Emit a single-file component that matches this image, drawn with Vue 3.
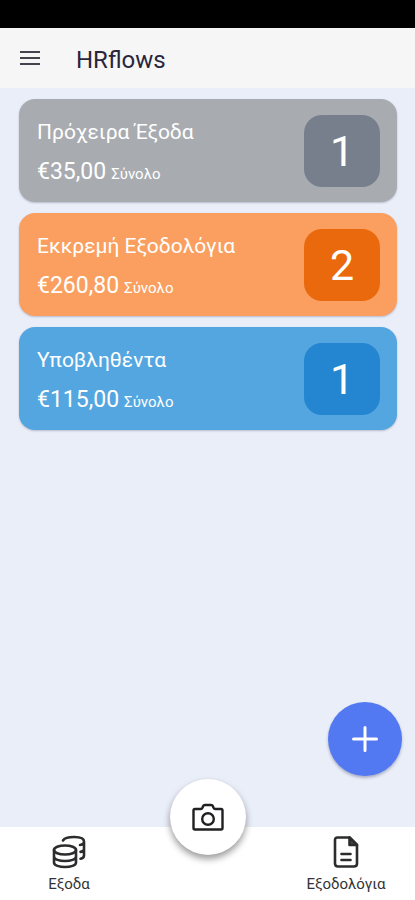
<script setup>
const cards = [
  { tone: 'draft', title: 'Πρόχειρα Έξοδα', amount: '€35,00', count: 1 },
  { tone: 'pending', title: 'Εκκρεμή Εξοδολόγια', amount: '€260,80', count: 2 },
  { tone: 'submitted', title: 'Υποβληθέντα', amount: '€115,00', count: 1 }
]
</script>

<template>
  <div class="screen">
    <div class="status"></div>
    <header class="bar">
      <button class="menu" type="button" aria-label="Μενού">
        <svg width="20" height="16" viewBox="0 0 20 16" fill="none" stroke="#44434d" stroke-width="2">
          <path d="M0 2H20M0 8H20M0 14H20" />
        </svg>
      </button>
      <h1>HRflows</h1>
    </header>

    <main class="content">
      <a v-for="card in cards" :key="card.tone" href="#" class="card" :class="card.tone">
        <div class="info">
          <h2>{{ card.title }}</h2>
          <p><span class="amount">{{ card.amount }}</span><small>Σύνολο</small></p>
        </div>
        <span class="count">{{ card.count }}</span>
      </a>
    </main>

    <footer class="dock">
      <button class="add" type="button" aria-label="Προσθήκη">
        <svg width="26" height="26" viewBox="0 0 26 26" fill="none" stroke="#fff" stroke-width="3" stroke-linecap="round">
          <path d="M13 1.5V24.5M1.5 13H24.5" />
        </svg>
      </button>
      <button class="camera" type="button" aria-label="Κάμερα">
        <svg width="32" height="28" viewBox="0 0 32 28" fill="none" stroke="#202022" stroke-width="2.4" stroke-linejoin="round">
          <path d="M3 6H8.5Q10 6 10.6 4.5L11 3.3Q11.5 2 13 2H19Q20.5 2 21 3.3L21.4 4.5Q22 6 23.5 6H29Q30.5 6 30.5 7.5V25Q30.5 26.5 29 26.5H3Q1.5 26.5 1.5 25V7.5Q1.5 6 3 6Z" />
          <circle cx="16" cy="16" r="5.8" />
        </svg>
      </button>
      <nav class="tabs">
        <a href="#">
          <svg width="34" height="34" viewBox="0 0 34 34" fill="none" stroke="#2c2c2e" stroke-width="2.6" stroke-linecap="round">
            <ellipse cx="13" cy="15" rx="11" ry="4.5" />
            <path d="M2 15V27.500C2 33.500 24 33.500 24 27.500V15M2 21.500C2 27.500 24 27.500 24 21.500" />
            <path d="M11 5.5C13.500 1 32 0.200 32 6.500V20.500C32 22.500 31 23.300 28.500 23.800M32 7C32 8.800 30.500 9.700 28 10M32 14C32 15.700 31 16.500 28.500 16.900" />
          </svg>
          <span>Εξοδα</span>
        </a>
        <a href="#">
          <svg width="34" height="34" viewBox="0 0 34 34" fill="none" stroke="#2c2c2e" stroke-width="2.6" stroke-linejoin="round" stroke-linecap="round">
            <path d="M8.500 2.500H20.500L28 10V28.500Q28 31.500 25 31.500H9Q6 31.500 6 28.500V5Q6 2.500 8.500 2.500Z" />
            <path d="M20.500 2.500V10H28Z" fill="#444446" />
            <path d="M12.500 19H21.500M12.500 25H21.500" />
          </svg>
          <span>Εξοδολόγια</span>
        </a>
      </nav>
    </footer>
  </div>
</template>

<style>
body {
  margin: 0;
}
</style>

<style scoped>
.screen {
  display: flex;
  flex-direction: column;
  min-height: 100vh;
  background: #eaeef9;
  font-family: Roboto, "Noto Sans", sans-serif;
}

button {
  display: flex;
  align-items: center;
  justify-content: center;
  padding: 0;
  border: 0;
  background: none;
}

a {
  color: inherit;
  text-decoration: none;
}

h1,
h2,
p {
  margin: 0;
  font-weight: 400;
}

.status {
  height: 28px;
  background: #000;
}

.bar {
  display: flex;
  align-items: center;
  gap: 36px;
  height: 60px;
  padding: 0 20px;
  background: #f6f6f7;
}

h1 {
  color: #29263c;
  font-size: 24px;
  line-height: 32px;
  padding-top: 4px;
}

.content {
  display: flex;
  flex: 1;
  flex-direction: column;
  gap: 11px;
  padding: 11px 18px 11px 19px;
}

.card {
  display: flex;
  align-items: center;
  justify-content: space-between;
  padding: 16px 17px 15px 18px;
  border-radius: 16px;
  color: #fff;
  box-shadow: 0 1px 2px rgba(60, 70, 100, 0.3);
}

.info {
  display: flex;
  flex-direction: column;
  gap: 12px;
  padding-top: 2px;
}

h2 {
  font-size: 21px;
  line-height: 28px;
}

p {
  display: flex;
  align-items: baseline;
  gap: 5px;
  line-height: 28px;
}

.amount {
  font-size: 23px;
}

small {
  font-size: 15px;
  line-height: 20px;
}

.count {
  display: flex;
  align-items: center;
  justify-content: center;
  width: 76px;
  height: 72px;
  border-radius: 18px;
  font-size: 43px;
}

.draft {
  background: #a8acb1;
}

.draft .count {
  background: #777f8d;
}

.pending {
  background: #fa9f60;
}

.pending .count {
  background: #ea690c;
}

.submitted {
  background: #54a6e0;
}

.submitted .count {
  background: #2485d0;
}

.dock {
  position: relative;
  background: #fff;
}

.add {
  position: absolute;
  right: 13px;
  bottom: 124px;
  width: 74px;
  height: 74px;
  border-radius: 50%;
  background: #5278f2;
  box-shadow: 0 2px 3px rgba(50, 60, 100, 0.35);
}

.camera {
  position: absolute;
  left: calc(50% - 38px);
  bottom: 45px;
  width: 76px;
  height: 76px;
  border-radius: 50%;
  background: #fff;
  box-shadow: 0 4px 7px rgba(0, 0, 0, 0.4);
}

.tabs {
  display: flex;
  justify-content: space-between;
  height: 73px;
}

.tabs a {
  display: flex;
  flex-direction: column;
  align-items: center;
  gap: 6px;
  width: 138px;
  padding-top: 8px;
  color: #333335;
  font-size: 15px;
  line-height: 18px;
}
</style>
